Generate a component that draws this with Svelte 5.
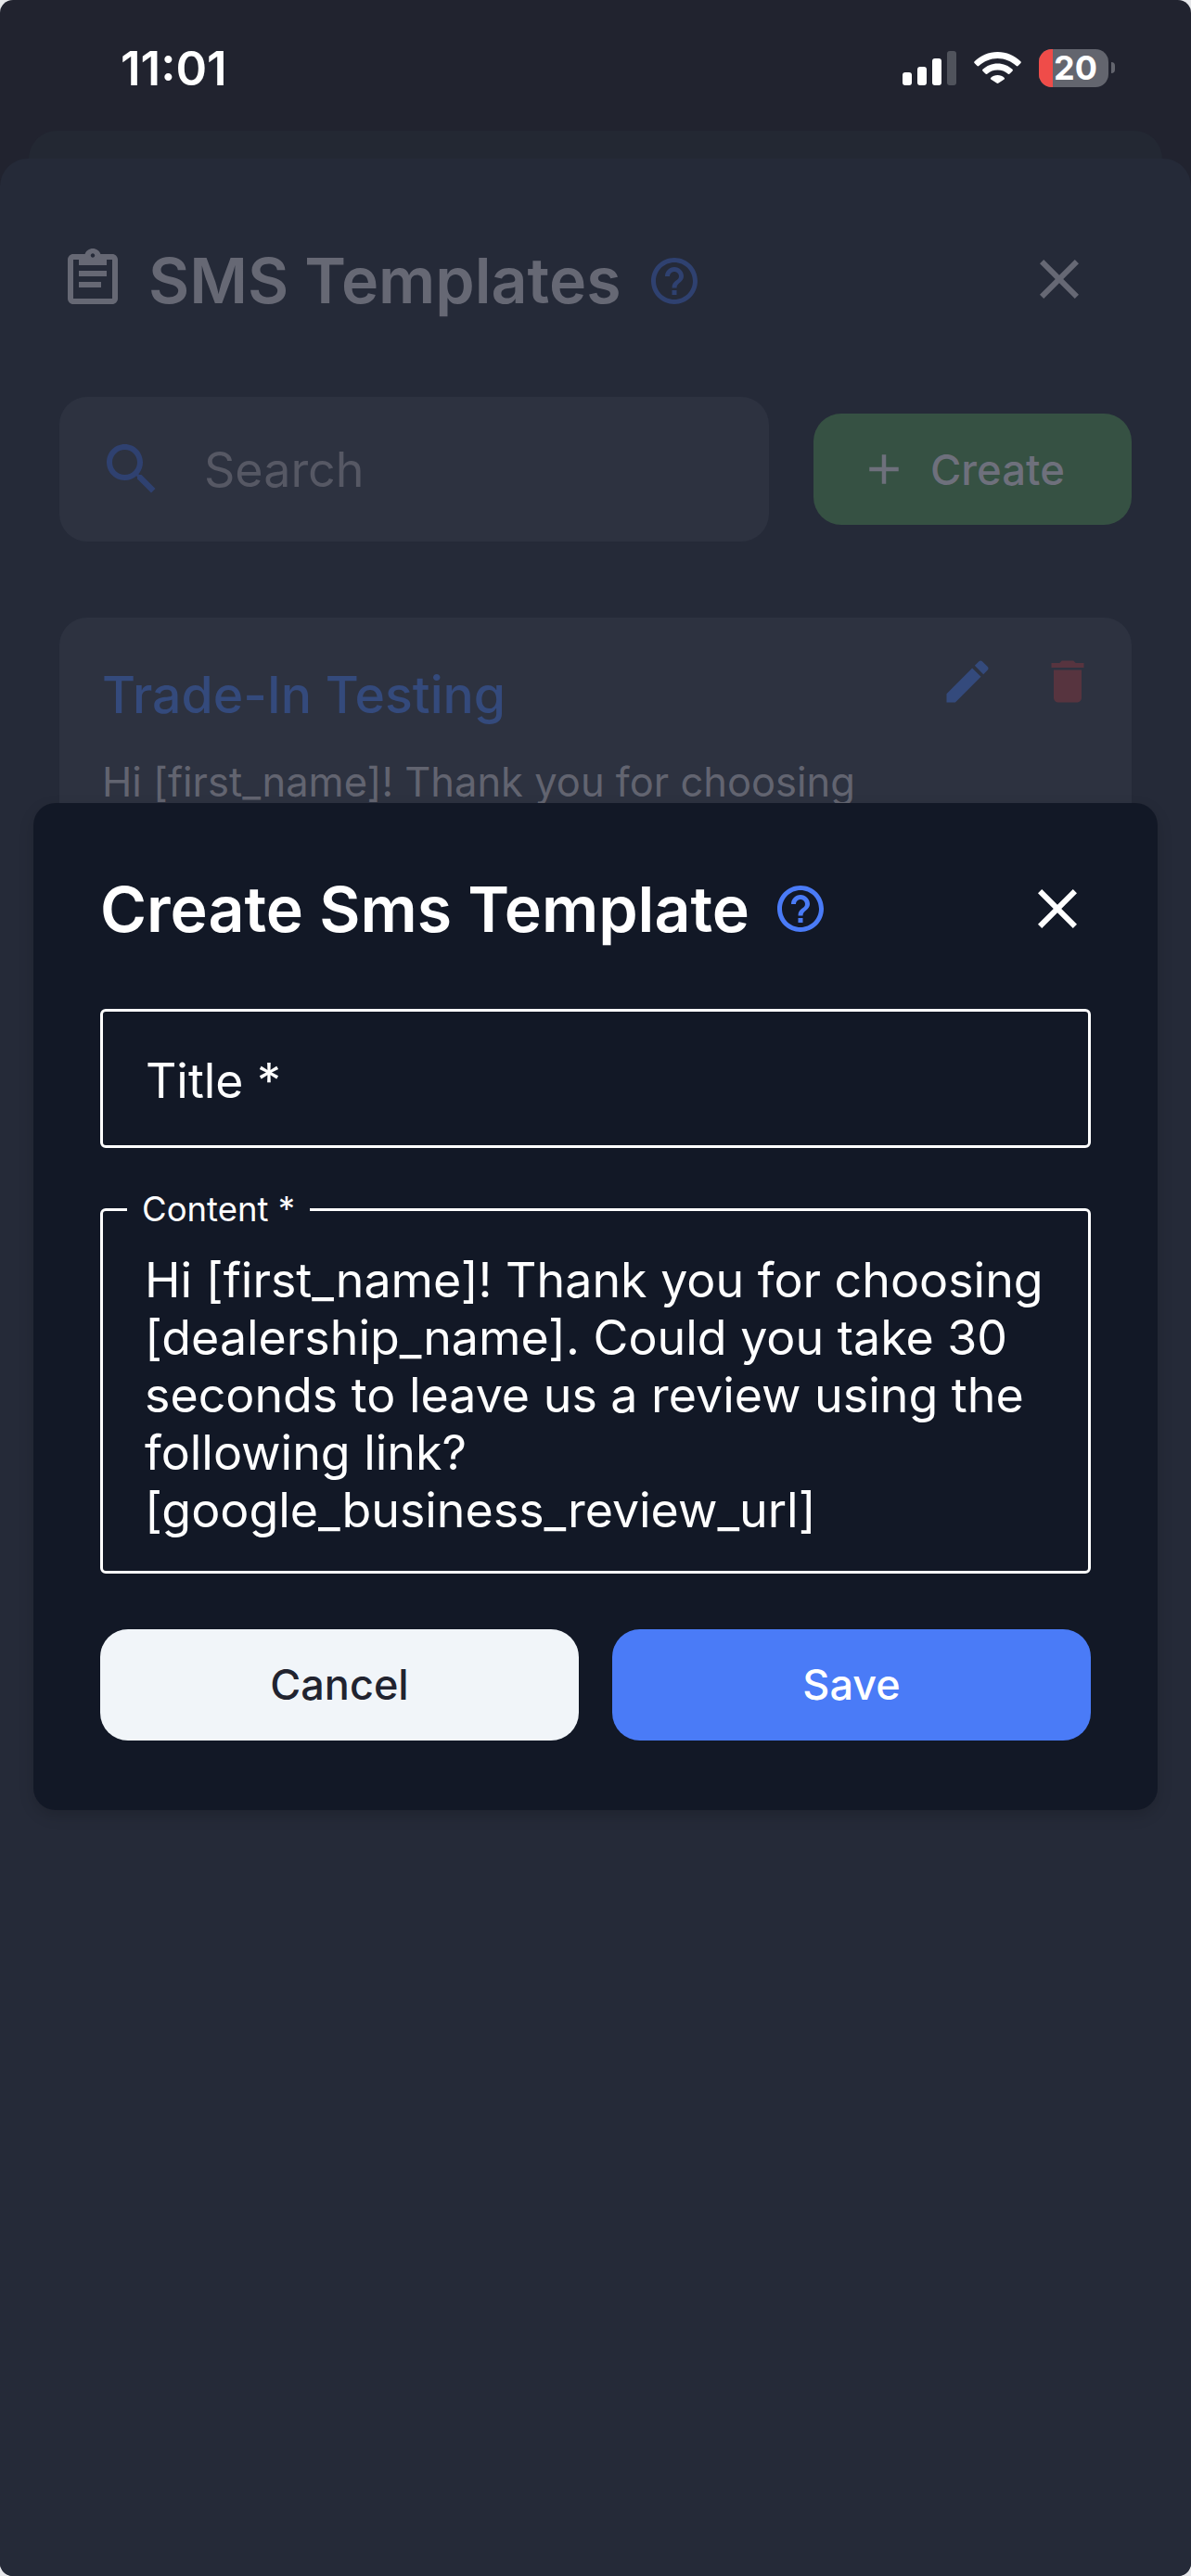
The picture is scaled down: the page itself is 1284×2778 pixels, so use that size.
<script>
  const lines = [
    'Hi [first_name]! Thank you for choosing',
    '[dealership_name]. Could you take 30',
    'seconds to leave us a review using the',
    'following link?',
    '[google_business_review_url]',
  ];
  const helpPath = 'M11 18h2v-2h-2v2zm1-16C6.48 2 2 6.48 2 12s4.48 10 10 10 10-4.48 10-10S17.52 2 12 2zm0 18c-4.41 0-8-3.59-8-8s3.59-8 8-8 8 3.59 8 8-3.59 8-8 8zm0-14c-2.21 0-4 1.79-4 4h2c0-1.1.9-2 2-2s2 .9 2 2c0 2-3 1.75-3 5h2c0-2.25 3-2.5 3-5 0-2.21-1.79-4-4-4z';
  const closePath = 'M19 6.41 17.59 5 12 10.59 6.41 5 5 6.41 10.59 12 5 17.59 6.41 19 12 13.41 17.59 19 19 17.59 13.41 12z';
</script>

<div class="screen">
  <div class="status">
    <span class="time">11:01</span>
    <div class="status-icons">
      <div class="signal">
        <i class="bar b1"></i>
        <i class="bar b2"></i>
        <i class="bar b3"></i>
        <i class="bar b4"></i>
      </div>
      <svg class="wifi" viewBox="0 0 51 34" fill="#fff">
        <path d="M25.5 0C15.8 0 7.2 3.9.6 10.2c-.6.6-.6 1.2-.1 1.8l3 3.1c.5.5 1.2.5 1.8 0C10.800 10 17.800 7 25.500 7s14.700 3 20.200 8.100c.6.5 1.300.5 1.800 0l3-3.100c.5-.6.5-1.200-.1-1.800C43.800 3.900 35.200 0 25.500 0z" />
        <path d="M25.500 12.500c-6.200 0-11.800 2.400-16 6.300-.6.6-.6 1.200-.1 1.800l3 3c.5.5 1.200.6 1.800.1 3-2.700 6.900-4.200 11.300-4.200s8.300 1.500 11.300 4.200c.6.5 1.300.4 1.800-.1l3-3c.5-.6.5-1.200-.1-1.800-4.200-3.900-9.800-6.300-16-6.300z" />
        <path d="M25.500 25c-2.800 0-5.300 1-7.200 2.700-.6.5-.6 1.200-.1 1.700l6.200 4.100c.6.6 1.600.6 2.200 0l6.100-4.100c.5-.5.5-1.200-.1-1.700-1.800-1.700-4.300-2.700-7.100-2.700z" />
      </svg>
      <div class="battery">
        <div class="level"></div>
        <span>20</span>
      </div>
      <div class="nub"></div>
    </div>
  </div>

  <div class="sheet-back"></div>
  <div class="sheet">
    <div class="head">
      <svg class="clip" viewBox="0 0 24 24" fill="currentColor">
        <path d="M19 3h-4.180C14.400 1.840 13.300 1 12 1s-2.400.84-2.820 2H5c-1.100 0-2 .9-2 2v14c0 1.100.9 2 2 2h14c1.100 0 2-.9 2-2V5c0-1.100-.9-2-2-2zm-7-.25c.41 0 .75.34.75.75s-.34.75-.75.75-.75-.34-.75-.75.34-.75.75-.75zM19 19H5V5h2v2h10V5h2v14z" />
        <path d="M7 9h10v2H7zM7 13h8v2H7z" />
      </svg>
      <h1>SMS Templates</h1>
      <svg class="help dim" viewBox="0 0 24 24" fill="currentColor"><path d={helpPath} /></svg>
      <svg class="close" viewBox="0 0 24 24" fill="currentColor"><path d={closePath} /></svg>
    </div>

    <div class="tools">
      <div class="search">
        <svg viewBox="0 0 24 24" fill="currentColor">
          <path d="M15.500 14h-.79l-.28-.27C15.410 12.590 16 11.110 16 9.500 16 5.910 13.090 3 9.500 3S3 5.910 3 9.500 5.910 16 9.500 16c1.610 0 3.090-.59 4.230-1.570l.27.28v.79l5 4.990L20.490 19l-4.990-5zm-6 0C7.010 14 5 11.990 5 9.500S7.010 5 9.500 5 14 7.010 14 9.500 11.990 14 9.500 14z" />
        </svg>
        <span>Search</span>
      </div>
      <div class="create">
        <svg viewBox="0 0 24 24" fill="currentColor"><path d="M19 13h-6v6h-2v-6H5v-2h6V5h2v6h6v2z" /></svg>
        <span>Create</span>
      </div>
    </div>

    <div class="card">
      <div class="card-top">
        <h2>Trade-In Testing</h2>
        <div class="card-actions">
          <svg class="edit" viewBox="0 0 24 24" fill="currentColor">
            <path d="M3 17.250V21h3.750L17.810 9.940l-3.750-3.750L3 17.250zM20.710 7.040c.39-.39.39-1.020 0-1.410l-2.340-2.340c-.39-.39-1.020-.39-1.410 0l-1.830 1.830 3.750 3.750 1.830-1.830z" />
          </svg>
          <svg class="trash" viewBox="0 0 24 24" fill="currentColor">
            <path d="M6 19c0 1.100.9 2 2 2h8c1.100 0 2-.9 2-2V7H6v12zM19 4h-3.500l-1-1h-5l-1 1H5v2h14V4z" />
          </svg>
        </div>
      </div>
      <p>Hi [first_name]! Thank you for choosing</p>
    </div>
  </div>

  <div class="dialog">
    <div class="dialog-head">
      <h3>Create Sms Template</h3>
      <svg class="help" viewBox="0 0 24 24" fill="currentColor"><path d={helpPath} /></svg>
      <svg class="close" viewBox="0 0 24 24" fill="currentColor"><path d={closePath} /></svg>
    </div>

    <div class="field">Title *</div>

    <fieldset class="area">
      <legend>Content *</legend>
      {#each lines as line}
        <div>{line}</div>
      {/each}
    </fieldset>

    <div class="actions">
      <div class="btn cancel">Cancel</div>
      <div class="btn save">Save</div>
    </div>
  </div>
</div>

<style>
  :global(body) {
    margin: 0;
    background: #e6e7ea;
  }

  .screen {
    position: relative;
    display: flex;
    flex-direction: column;
    width: 1284px;
    height: 2778px;
    overflow: hidden;
    border-radius: 14px;
    background: #21232f;
    font-family: Inter, "Liberation Sans", sans-serif;
  }

  .status {
    display: flex;
    justify-content: space-between;
    align-items: center;
    flex: none;
    height: 141px;
    box-sizing: border-box;
    padding: 5px 82px 0 130px;
    color: #fff;
  }
  .time { font-size: 51px; font-weight: 600; line-height: 73px; }
  .status-icons { display: flex; align-items: center; }
  .signal { display: flex; align-items: flex-end; gap: 6px; height: 37px; margin-right: 19px; }
  .bar { display: block; width: 10px; border-radius: 3px; background: #fff; }
  .b1 { height: 14px; }
  .b2 { height: 20px; }
  .b3 { height: 29px; }
  .b4 { height: 37px; background: #50535c; }
  .wifi { width: 51px; height: 34px; margin-right: 19px; }
  .battery {
    display: flex;
    align-items: center;
    width: 75px;
    height: 41px;
    border-radius: 14px;
    background: #63656e;
  }
  .level { flex: none; width: 15px; height: 100%; border-radius: 14px 0 0 14px; background: #ef4c49; }
  .battery span {
    margin-left: 1px;
    font-size: 36px;
    font-weight: 700;
    line-height: 41px;
  }
  .nub { width: 4px; height: 12px; margin-left: 3px; border-radius: 0 6px 6px 0; background: #63656e; }

  .sheet-back {
    flex: none;
    height: 30px;
    margin: 0 31px;
    border-radius: 30px 30px 0 0;
    background: #232833;
  }

  .sheet {
    flex: 1;
    padding: 0 64px;
    border-radius: 30px 30px 0 0;
    background: #252a38;
  }

  .head {
    display: flex;
    align-items: center;
    height: 72px;
    margin-top: 94px;
    color: #666874;
  }
  .clip { flex: none; width: 72px; height: 72px; margin-right: 24px; }
  h1 { margin: 0; padding-top: 2px; font-size: 68px; font-weight: 600; line-height: 72px; }
  .help { flex: none; width: 60px; height: 60px; color: #4a7bf7; }
  .head .help { margin: 3px 0 0 27px; }
  .dim { color: #2f4170; }
  .close { flex: none; width: 72px; height: 72px; margin-left: auto; }
  .head .close { margin-right: 42px; }

  .tools { display: flex; align-items: center; gap: 48px; margin-top: 91px; }
  .search {
    display: flex;
    align-items: center;
    gap: 42px;
    width: 765px;
    height: 156px;
    padding-left: 42px;
    box-sizing: border-box;
    border-radius: 30px;
    background: #2d3240;
    color: #565864;
    font-size: 52px;
  }
  .search svg { flex: none; width: 72px; height: 72px; color: #2f4170; }
  .create {
    display: flex;
    align-items: center;
    gap: 29px;
    flex: 1;
    height: 120px;
    padding-left: 55px;
    box-sizing: border-box;
    border-radius: 30px;
    background: #365143;
    color: #6e707c;
    font-size: 45.5px;
    font-weight: 500;
  }
  .create svg { flex: none; width: 54px; height: 54px; margin: 0 -6px; }

  .card {
    height: 400px;
    margin-top: 82px;
    padding: 39px 48px 0 46px;
    box-sizing: border-box;
    border-radius: 30px;
    background: #2d3240;
  }
  .card-top { display: flex; justify-content: space-between; align-items: flex-start; }
  h2 { margin: 10px 0 0; font-size: 55.3px; font-weight: 500; line-height: 68px; color: #344a7c; }
  .card-actions { display: flex; gap: 48px; margin-right: -9px; }
  .edit { width: 60px; height: 60px; color: #344a7c; }
  .trash { width: 60px; height: 60px; color: #57343f; }
  p { margin: 29px 0 0; font-size: 43.5px; line-height: 62px; color: #626470; }

  .dialog {
    position: absolute;
    left: 36px;
    top: 866px;
    width: 1212px;
    height: 1086px;
    padding: 0 72px;
    box-sizing: border-box;
    border-radius: 24px;
    background: #121826;
    box-shadow: 0 6px 16px rgba(0, 0, 0, 0.15);
    color: #fff;
  }
  .dialog-head { display: flex; align-items: center; height: 72px; padding-top: 78px; }
  h3 { margin: 0 25px 0 0; font-size: 68px; font-weight: 600; line-height: 72px; }

  .field {
    height: 150px;
    margin-top: 72px;
    padding-left: 46px;
    box-sizing: border-box;
    border: 3px solid #fff;
    border-radius: 6px;
    font-size: 51.7px;
    line-height: 148px;
  }

  .area {
    height: 415px;
    margin: 44px 0 0;
    padding: 24px 0 0 45px;
    box-sizing: border-box;
    border: 3px solid #fff;
    border-radius: 6px;
    font-size: 51.9px;
    line-height: 62px;
  }
  legend {
    margin-left: -19px;
    padding: 0 16px;
    font-size: 36.5px;
    line-height: 44px;
  }

  .actions { display: flex; gap: 36px; margin-top: 60px; }
  .btn {
    flex: 1;
    height: 120px;
    border-radius: 30px;
    font-size: 45px;
    font-weight: 500;
    line-height: 120px;
    text-align: center;
  }
  .cancel { background: #f1f5f9; color: #21232f; }
  .save { background: #4a7bf7; color: #fff; }
</style>
